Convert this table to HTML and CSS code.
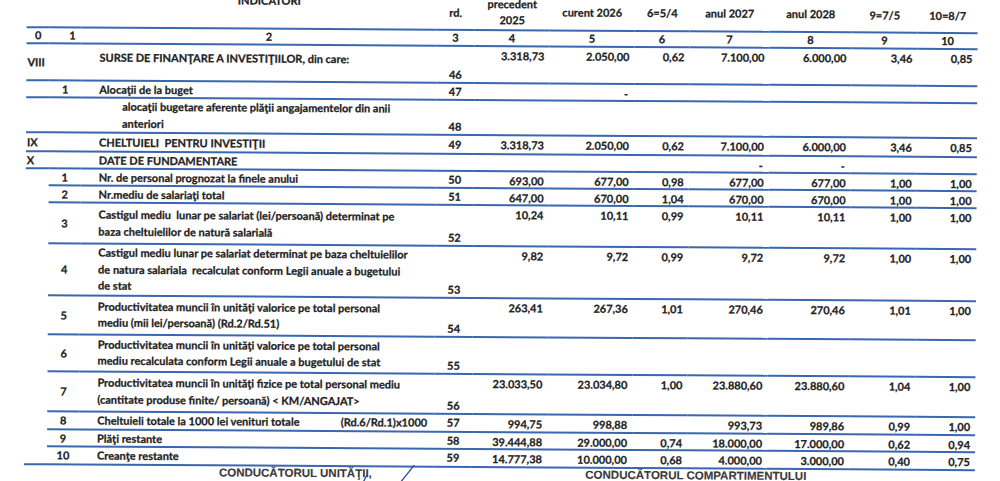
FILE: index.html
```html
<!DOCTYPE html>
<html lang="ro">
<head>
<meta charset="utf-8">
<title>Indicatori</title>
<link rel="stylesheet" href="styles.css">
</head>
<body>
<div class="page">
  <div class="sheet">
    <table class="grid">
      <colgroup>
        <col class="w0"><col class="w1"><col class="w2"><col class="w3"><col class="w4"><col class="w5"><col class="w6"><col class="w7"><col class="w8"><col class="w9"><col class="w10">
      </colgroup>
      <tr class="hd">
        <td></td>
        <td></td>
        <td class="pb19">INDICATORI</td>
        <td class="pb8">rd.</td>
        <td class="pb1">Realizat /<br>precedent<br>2025</td>
        <td class="pb9"><span class="up">Propuneri an</span>curent 2026</td>
        <td class="pb9">6=5/4</td>
        <td class="pb9"><span class="up">Estimări în</span>anul 2027</td>
        <td class="pb9"><span class="up">Estimări în</span>anul 2028</td>
        <td class="pb8">9=7/5</td>
        <td class="pb8">10=8/7</td>
      </tr>
      <tr class="hn">
        <td>0</td><td class="k1">1</td><td class="k2">2</td><td>3</td><td>4</td><td>5</td><td>6</td><td>7</td><td>8</td><td>9</td><td>10</td>
      </tr>
      <tr class="r37">
        <td class="c0">VIII</td><td class="c1"></td>
        <td class="c2 top">SURSE DE FINANŢARE A INVESTIŢIILOR, din care:</td>
        <td class="rd">46</td>
        <td class="n">3.318,73</td><td class="n">2.050,00</td><td class="n">0,62</td><td class="n">7.100,00</td><td class="n">6.000,00</td><td class="n">3,46</td><td class="n">0,85</td>
      </tr>
      <tr class="r17">
        <td class="c0"></td><td class="c1">1</td>
        <td class="c2">Alocaţii de la buget</td>
        <td class="rd mid">47</td>
        <td class="n"></td><td class="n dash">-</td><td class="n"></td><td class="n"></td><td class="n"></td><td class="n"></td><td class="n"></td>
      </tr>
      <tr class="r35">
        <td class="c0"></td><td class="c1"></td>
        <td class="c2 ml sub">alocaţii bugetare aferente plăţii angajamentelor din anii<br>anteriori</td>
        <td class="rd">48</td>
        <td class="n"></td><td class="n"></td><td class="n"></td><td class="n"></td><td class="n"></td><td class="n"></td><td class="n"></td>
      </tr>
      <tr class="r19">
        <td class="c0">IX</td><td class="c1"></td>
        <td class="c2">CHELTUIELI&nbsp; PENTRU INVESTIŢII</td>
        <td class="rd mid">49</td>
        <td class="n">3.318,73</td><td class="n">2.050,00</td><td class="n">0,62</td><td class="n">7.100,00</td><td class="n">6.000,00</td><td class="n">3,46</td><td class="n">0,85</td>
      </tr>
      <tr class="r16">
        <td class="c0">X</td><td class="c1"></td>
        <td class="c2">DATE DE FUNDAMENTARE</td>
        <td class="rd"></td>
        <td class="n"></td><td class="n"></td><td class="n"></td><td class="n dash">-</td><td class="n dash">-</td><td class="n"></td><td class="n"></td>
      </tr>
      <tr class="r17">
        <td class="c0 nb"></td><td class="c1">1</td>
        <td class="c2">Nr. de personal prognozat la finele anului</td>
        <td class="rd mid">50</td>
        <td class="n">693,00</td><td class="n">677,00</td><td class="n">0,98</td><td class="n">677,00</td><td class="n">677,00</td><td class="n">1,00</td><td class="n">1,00</td>
      </tr>
      <tr class="r17">
        <td class="c0 nb"></td><td class="c1">2</td>
        <td class="c2">Nr.mediu de salariaţi total</td>
        <td class="rd mid">51</td>
        <td class="n">647,00</td><td class="n">670,00</td><td class="n">1,04</td><td class="n">670,00</td><td class="n">670,00</td><td class="n">1,00</td><td class="n">1,00</td>
      </tr>
      <tr class="r41">
        <td class="c0 nb"></td><td class="c1">3</td>
        <td class="c2 ml">Castigul mediu&nbsp; lunar pe salariat (lei/persoană) determinat pe<br>baza cheltuielilor de natură salarială</td>
        <td class="rd">52</td>
        <td class="n">10,24</td><td class="n">10,11</td><td class="n">0,99</td><td class="n">10,11</td><td class="n">10,11</td><td class="n">1,00</td><td class="n">1,00</td>
      </tr>
      <tr class="r50">
        <td class="c0 nb"></td><td class="c1">4</td>
        <td class="c2 ml">Castigul mediu lunar pe salariat determinat pe baza cheltuielilor<br>de natura salariala&nbsp; recalculat conform Legii anuale a bugetului<br>de stat</td>
        <td class="rd">53</td>
        <td class="n">9,82</td><td class="n">9,72</td><td class="n">0,99</td><td class="n">9,72</td><td class="n">9,72</td><td class="n">1,00</td><td class="n">1,00</td>
      </tr>
      <tr class="r39">
        <td class="c0 nb"></td><td class="c1">5</td>
        <td class="c2 ml">Productivitatea muncii în unităţi valorice pe total personal<br>mediu (mii lei/persoană) (Rd.2/Rd.51)</td>
        <td class="rd">54</td>
        <td class="n">263,41</td><td class="n">267,36</td><td class="n">1,01</td><td class="n">270,46</td><td class="n">270,46</td><td class="n">1,01</td><td class="n">1,00</td>
      </tr>
      <tr class="r37">
        <td class="c0 nb"></td><td class="c1">6</td>
        <td class="c2 ml">Productivitatea muncii în unităţi valorice pe total personal<br>mediu recalculata conform Legii anuale a bugetului de stat</td>
        <td class="rd">55</td>
        <td class="n"></td><td class="n"></td><td class="n"></td><td class="n"></td><td class="n"></td><td class="n"></td><td class="n"></td>
      </tr>
      <tr class="r40">
        <td class="c0 nb"></td><td class="c1">7</td>
        <td class="c2 ml">Productivitatea muncii în unităţi fizice pe total personal mediu<br>(cantitate produse finite/ persoană) &lt; KM/ANGAJAT&gt;</td>
        <td class="rd">56</td>
        <td class="n">23.033,50</td><td class="n">23.034,80</td><td class="n">1,00</td><td class="n">23.880,60</td><td class="n">23.880,60</td><td class="n">1,04</td><td class="n">1,00</td>
      </tr>
      <tr class="r18">
        <td class="c0 nb"></td><td class="c1">8</td>
        <td class="c2"><div class="split"><span>Cheltuieli totale la 1000 lei venituri totale</span><span>(Rd.6/Rd.1)x1000</span></div></td>
        <td class="rd mid">57</td>
        <td class="n">994,75</td><td class="n">998,88</td><td class="n"></td><td class="n">993,73</td><td class="n">989,86</td><td class="n">0,99</td><td class="n">1,00</td>
      </tr>
      <tr class="r17">
        <td class="c0 nb"></td><td class="c1">9</td>
        <td class="c2">Plăţi restante</td>
        <td class="rd mid">58</td>
        <td class="n">39.444,88</td><td class="n">29.000,00</td><td class="n">0,74</td><td class="n">18.000,00</td><td class="n">17.000,00</td><td class="n">0,62</td><td class="n">0,94</td>
      </tr>
      <tr class="r18">
        <td class="c0"></td><td class="c1">10</td>
        <td class="c2">Creanţe restante</td>
        <td class="rd mid">59</td>
        <td class="n">14.777,38</td><td class="n">10.000,00</td><td class="n">0,68</td><td class="n">4.000,00</td><td class="n">3.000,00</td><td class="n">0,40</td><td class="n">0,75</td>
      </tr>
    </table>
    <div class="foot">
      <div class="sig-left">CONDUCĂTORUL UNITĂŢII,</div>
      <div class="sig-right">CONDUCĂTORUL COMPARTIMENTULUI</div>
      <svg class="pen" width="80" height="30" viewBox="0 0 80 30">
        <path d="M58 1 L39 25" />
        <path d="M11 11 Q8 16 6 22" />
      </svg>
    </div>
  </div>
</div>
</body>
</html>
```
FILE: styles.css
```css
* { box-sizing: border-box; }
html, body { margin: 0; padding: 0; background: #ffffff; }
body {
  font-family: Lato, "Open Sans", "Liberation Sans", sans-serif;
  font-weight: 700;
  font-size: 11px;
  color: #222222;
  -webkit-text-stroke: 0.25px #222222;
}
.page {
  width: 1000px;
  height: 481px;
  overflow: hidden;
  position: relative;
}
.sheet {
  margin-top: -28px;
  padding-left: 27px;
  transform: rotate(0.36deg);
  transform-origin: 0 0;
  position: relative;
}
.grid {
  border-collapse: separate;
  border-spacing: 0;
  table-layout: fixed;
  width: 951px;
}
.w0 { width: 23px; }
.w1 { width: 32px; }
.w2 { width: 355px; }
.w3 { width: 38px; }
.w4 { width: 75px; }
.w5 { width: 85px; }
.w6 { width: 55px; }
.w7 { width: 80px; }
.w8 { width: 82px; }
.w9 { width: 66px; }
.w10 { width: 60px; }

.grid td {
  padding: 0;
  border-bottom: 2px solid #3a67b0;
  line-height: 15px;
  white-space: nowrap;
  vertical-align: top;
}

/* header */
.hd { height: 56px; }
.hd td {
  vertical-align: bottom;
  text-align: center;
  line-height: 16px;
  padding-bottom: 9px;
}
.hd td.pb19 { padding-bottom: 19px; padding-left: 20px; }
.hd td.pb8 { padding-bottom: 8px; }
.hd td.pb9 { padding-bottom: 9px; }
.hd td.pb1 { padding-bottom: 1px; }
.up { display: block; margin-bottom: 3px; }

.hn { height: 16px; }
.hn td {
  text-align: center;
  vertical-align: middle;
  line-height: 14px;
}
.hn td.k1 { padding-left: 14px; }
.hn td.k2 { padding-left: 20px; }

/* body rows */
.r16 { height: 16px; }
.r17 { height: 17px; }
.r18 { height: 18px; }
.r19 { height: 19px; }
.r35 { height: 35px; }
.r37 { height: 37px; }
.r39 { height: 39px; }
.r40 { height: 40px; }
.r41 { height: 41px; }
.r50 { height: 50px; }

.grid td.c0 {
  vertical-align: middle;
  padding-left: 1px;
}
.grid td.nb { border-bottom-color: transparent; }
.grid td.c1 {
  vertical-align: middle;
  text-align: center;
}
.grid td.c2 {
  vertical-align: middle;
  padding-left: 18px;
}
.grid td.c2.ml { line-height: 16.5px; }
.grid td.c2.top {
  vertical-align: top;
  padding-top: 5px;
}
.grid td.c2.sub { padding-left: 41px; }
.split {
  display: flex;
  justify-content: space-between;
  padding-right: 7px;
}
.grid td.rd {
  vertical-align: bottom;
  text-align: center;
}
.grid td.rd.mid { vertical-align: middle; }
.grid td.n {
  text-align: right;
  padding-right: 5px;
  padding-top: 2px;
  line-height: 13px;
}
.grid td.dash { padding-right: 6px; }

/* footer */
.foot {
  display: flex;
  font-family: "Liberation Sans", Arial, sans-serif;
  font-size: 11.5px;
  color: #3a3a3a;
  -webkit-text-stroke: 0.1px #3a3a3a;
  line-height: 12px;
  position: relative;
}
.sig-left { width: 543px; text-align: center; }
.sig-right { width: 258px; text-align: center; }
.pen {
  position: absolute;
  left: 332px;
  top: -3px;
  fill: none;
  stroke: #3550a6;
  stroke-width: 1.4;
  stroke-linecap: round;
}
```
